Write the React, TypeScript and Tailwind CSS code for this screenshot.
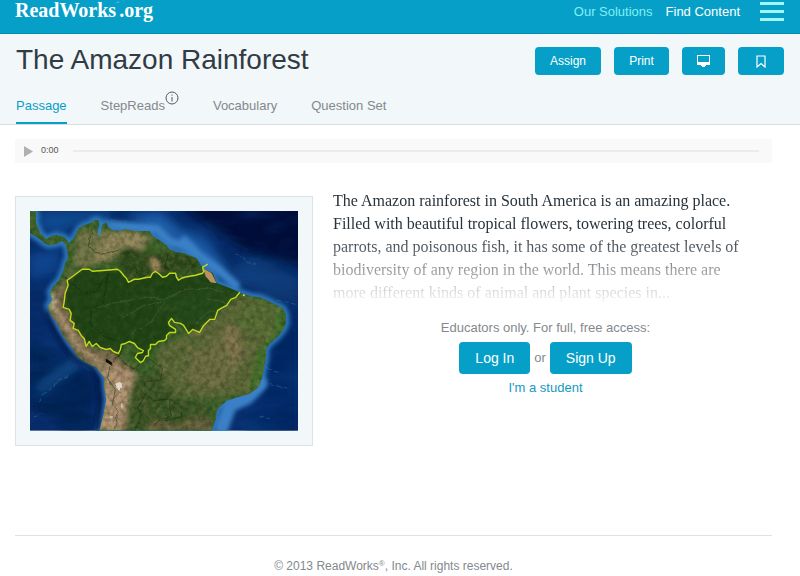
const LAND =
  'M0 0 L6 1 L6 12 L10 22 L16 28 L22 25 L26 24 L34 26 L39 32 L44 27 L46 22 L49 17 L54 14 L61 12 L64 9 L68 9 L69 14 L67 20 L71 20 L72 14 L76 11 L78 16 L82 19 L89 20 L96 18 L104 20 L112 20 L119 20 L122 25 L129 29 L136 34 L139 38 L146 41 L154 42 L166 47 L169 52 L172 57 L182 62 L184 67 L186 72 L199 77 L211 82 L220 85 L229 86 L238 90 L246 94 L252 97 L255 104 L255 112 L252 119 L246 126 L240 131 L235 137 L235 147 L233 156 L231 167 L227 176 L219 182 L208 185 L196 189 L190 194 L186 199 L185 208 L181 219 L69 219 L72 208 L74 199 L76 188 L74 176 L74 166 L66 156 L55 151 L46 144 L42 136 L37 130 L32 122 L26 110 L19 101 L18 94 L22 89 L20 81 L24 74 L29 69 L32 62 L34 57 L35 52 L38 46 L37 39 L36 34 L32 30 L26 33 L19 34 L14 32 L11 29 L5 25 L0 22 Z';

const AMAZON =
  'M177 53 L174 55 L172 56 L173 60 L172 62 L165 64 L159 65 L154 66 L151 67 L148 69 L146 66 L145 62 L139 62 L136 65 L132 66 L129 63 L125 60 L122 62 L120 66 L117 66 L108 68 L104 68 L98 71 L96 67 L94 65 L90 60 L87 58 L76 59 L62 60 L59 58 L52 58 L48 61 L44 64 L40 67 L37 69 L38 74 L35 82 L34 91 L33 96 L39 98 L41 102 L40 109 L44 112 L43 117 L48 119 L51 124 L54 127 L56 135 L59 130 L62 135 L66 132 L70 136 L76 138 L80 137 L83 140 L88 142 L90 138 L91 133 L95 132 L99 130 L104 132 L107 136 L113 139 L112 141 L107 142 L105 146 L110 151 L113 149 L115 145 L118 144 L118 139 L120 137 L120 133 L125 133 L128 130 L134 129 L136 127 L136 124 L139 121 L145 121 L145 118 L139 114 L138 111 L141 107 L144 111 L150 112 L153 114 L158 122 L162 118 L169 121 L173 114 L179 108 L184 108 L187 99 L192 96 L196 94 L200 88 L205 86 L209 81';

const tools = 'flex h-7 items-center justify-center rounded bg-[#069fc8] text-xs text-white';
const blueLink = 'flex h-8 items-center justify-center rounded bg-[#069fc8] px-4 text-sm text-white';

function AmazonMap() {
  return (
    <svg viewBox="0 0 267 219" className="block w-full" role="img" aria-label="Satellite map of the Amazon rainforest">
      <defs>
        <filter id="soft" x="-20%" y="-20%" width="140%" height="140%">
          <feGaussianBlur stdDeviation="5" />
        </filter>
        <filter id="coast" x="-20%" y="-20%" width="140%" height="140%">
          <feGaussianBlur stdDeviation="2" />
        </filter>
        <filter id="edge" x="-5%" y="-5%" width="110%" height="110%">
          <feTurbulence type="fractalNoise" baseFrequency="0.12" numOctaves="3" seed="4" />
          <feDisplacementMap in="SourceGraphic" scale="4" xChannelSelector="R" yChannelSelector="G" />
        </filter>
        <filter id="terrain" x="0" y="0" width="100%" height="100%" colorInterpolationFilters="sRGB">
          <feTurbulence type="fractalNoise" baseFrequency="0.16" numOctaves="5" seed="9" />
          <feColorMatrix values="0 0 0 0 0.62  0 0 0 0 0.56  0 0 0 0 0.36  1.8 1.2 0 0 -1.25" />
        </filter>
        <filter id="shade" x="0" y="0" width="100%" height="100%" colorInterpolationFilters="sRGB">
          <feTurbulence type="fractalNoise" baseFrequency="0.2" numOctaves="4" seed="21" />
          <feColorMatrix values="0 0 0 0 0.04  0 0 0 0 0.1  0 0 0 0 0.02  2 1 0 0 -1.2" />
        </filter>
        <filter id="waves" x="0" y="0" width="100%" height="100%" colorInterpolationFilters="sRGB">
          <feTurbulence type="fractalNoise" baseFrequency="0.02 0.05" numOctaves="5" seed="3" />
          <feColorMatrix values="0 0 0 0 0.08  0 0 0 0 0.3  0 0 0 0 0.6  2 1 0 0 -1.3" />
        </filter>
        <clipPath id="frame"><rect width="267" height="219" /></clipPath>
        <clipPath id="land"><path d={LAND} /></clipPath>
      </defs>
      <g clipPath="url(#frame)">
        <rect width="267" height="219" fill="#062a66" />
        <g filter="url(#soft)">
          <path d="M145 -10 H277 V55 L225 45 L190 25 Z" fill="#020f38" />
          <path d="M8 0 H80 V8 L50 12 L30 22 L12 18Z" fill="#0b4a8f" />
          <path d="M0 125 L45 150 L65 175 L60 219 H35 L0 195Z" fill="#042153" />
          <path d="M0 42 L30 38 L28 60 L0 68Z" fill="#08428a" />
          <path d="M95 5 L130 0 L150 18 L175 28 L195 55 L215 72 L180 60 L140 30Z" fill="#1a5ca6" />
          <path d="M190 60 L225 45 L267 68 V92 L240 88Z" fill="#0a3973" />
          <path d="M240 130 L267 105 V219 H215Z" fill="#052762" />
          <path d="M8 178 L48 150" stroke="#164f8d" strokeWidth="7" />
        </g>
        <rect width="267" height="219" filter="url(#waves)" opacity=".3" />
        <path d={LAND} fill="none" stroke="#2f78bd" strokeWidth="7" strokeLinejoin="round" filter="url(#coast)" />
        <g filter="url(#coast)" fill="none" stroke="#3a80c6" strokeLinecap="round" strokeLinejoin="round">
          <path d="M82 14 L126 18 L140 31 L155 35 L168 44 L188 59 L205 74" strokeWidth="9" />
          <path d="M154 29 L166 41" strokeWidth="8" />
          <path d="M24 104 L36 123 L46 138" strokeWidth="7" />
          <path d="M230 172 L216 186 L199 194 L191 216" strokeWidth="14" />
        </g>
        <path d="M15 99 L24 118 L35 136 L47 149 L62 157 L68 168 L70 190 L67 219" fill="none" stroke="#021742" strokeWidth="4" filter="url(#coast)" />
        <g fill="none" stroke="#3a78aa" strokeWidth="1" filter="url(#edge)" opacity=".45">
          <path d="M80 9 L94 11 L106 11 M9 190 L14 182 L28 171 L38 163 M4 204 L12 201 M204 42 L215 50 L225 52 M236 157 L249 160 M239 173 L260 177 M228 205 L239 207 M246 89 L265 93" strokeDasharray="5 2" />
        </g>

        <path d={LAND} fill="#3b6329" />
        <g clipPath="url(#land)">
          <g filter="url(#coast)">
            <path d="M49 18 L72 20 L97 20 L123 25 L113 38 L94 36 L84 49 L67 53 L50 56 L43 48Z" fill="#75784a" />
            <path d="M78 24 L105 20 L117 31 L108 41 L92 33 L78 47 L65 51 L69 38Z" fill="#958a5f" />
            <path d="M85 47 L96 35 L119 42 L145 42 L169 50 L168 61 L134 62 L118 65 L97 68Z" fill="#2d4b1c" />
            <path d="M119 48 L125 46 L130 56 L127 61 L122 57Z" fill="#ad9167" />
            <path d={AMAZON} fill="#234719" />
            <path d="M135 88 L175 77 L186 73 L207 83 L187 99 L174 115 L142 111 L126 98Z" fill="#2f5723" />
            <path d="M192 99 L210 85 L249 96 L254 112 L237 133 L231 163 L218 181 L180 187 L145 184 L127 166 L127 137 L158 122Z" fill="#5c6937" />
            <path d="M190 117 L207 115 L211 132 L222 142 L208 151 L202 169 L181 177 L154 169 L161 141 L179 136Z" fill="#6d6e43" />
            <path d="M196 113 L208 114 L209 151 L202 153 L194 132Z" fill="#817450" />
            <path d="M213 90 L246 96 L253 108 L239 128 L218 117 L203 118Z" fill="#566e34" />
            <path d="M246 96 L255 103 L253 117 L235 137 L234 160 L226 179 L219 175 L227 138 L245 119Z" fill="#43732b" />
            <path d="M104 165 L128 158 L147 187 L178 190 L181 219 H98Z" fill="#3a5728" />
            <path d="M25 78 L37 68 L34 94 L47 119 L62 138 L81 139 L106 160 L99 180 L97 219 H69 L74 167 L60 154 L45 142 L20 103Z" fill="#806d50" />
            <path d="M78 150 L105 163 L98 190 L91 219 H72 L78 185 L74 166Z" fill="#b49577" />
            <path d="M20 90 L29 104 L50 137 L69 151 L76 168 L76 188 L70 219" fill="none" stroke="#bda281" strokeWidth="4" />
            <path d="M36 70 L51 42 L59 24 M40 67 L47 48 M51 60 L63 34" fill="none" stroke="#6f784a" strokeWidth="3" />
            <path d="M20 82 L24 90 L20 97" fill="none" stroke="#d2c1a8" strokeWidth="4" />
            <path d="M120 207 L142 213 L169 205 L181 209 V219 H117Z" fill="#66613c" />
          </g>
          <rect width="267" height="219" filter="url(#terrain)" opacity=".3" />
          <rect width="267" height="219" filter="url(#shade)" opacity=".3" />
          <path d={AMAZON} fill="#1c4112" opacity=".6" />
          <path d="M172 56 L181 62 L186 72 L180 71 L175 65Z" fill="#b8935f" />
          <g fill="none" stroke="#172410" strokeWidth=".7" filter="url(#edge)" opacity=".7">
            <path d="M62 18 L58 35 L64 41 L76 43 L88 39 M36 67 L53 82 L67 80 L78 62 L73 92 L61 99 L60 113 L74 125 L85 130" />
            <path d="M99 51 L111 66 L120 61 M137 45 L134 56 L145 65 M154 44 L164 54 L154 64 M93 137 L80 155 L77 166 L85 178 L82 193 L88 199 L84 219" />
            <path d="M85 142 L103 158 L116 145 L132 157 L130 168 L116 171 L110 180 L124 189 L139 187 L140 203 L123 213 M140 186 L151 195 L151 205 L134 209 M104 219 L111 204 L107 195 L116 181" />
          </g>
          <g fill="none" stroke="#536843" strokeWidth="1" filter="url(#edge)" opacity=".5">
            <path d="M60 99 L82 92 L100 89 L116 85 L134 88 L155 78 L174 77 L192 80 M92 106 L111 96 L133 89 M101 123 L122 109 L135 90 M164 113 L180 99 L193 104" />
            <path d="M176 88 L187 88 L205 98 M145 113 L165 134 L181 133 L198 120 M144 158 L166 153 L178 171 M199 142 L216 146 L225 138" />
          </g>
          <path d="M76 148 L81 151 L81 153 L76 150Z" fill="#080c09" stroke="#080c09" />
          <g fill="#e1dbce" filter="url(#edge)">
            <path d="M85 172 L90 170 L92 175 L89 178 L86 176Z" />
            <path d="M91 191 l3 2 l-1 3 l-3 -2z M88 182 l2 0 l0 3 l-2 -1z M80 204 l3 1 l-1 3 l-3 -1z" opacity=".6" />
          </g>
        </g>
        <path d="M68 20 L71 17 L70 25 L67 24Z" fill="#3e85b5" />
        <path d={AMAZON} fill="none" stroke="#c2d91e" strokeWidth="1.4" strokeLinejoin="round" />
        <circle cx="213" cy="84" r="1" fill="#dcd67a" />
      </g>
    </svg>
  );
}

export default function App() {
  return (
    <div className="min-h-screen bg-white font-['Liberation_Sans',Arial,sans-serif] text-[#83898d]">
      <header className="flex h-[34px] items-start justify-between border-b border-[#058eb4] bg-[#069fc8] pr-4 pl-[15px]">
        <a href="#" className="flex font-['Liberation_Serif',serif] text-xl leading-5 font-bold text-white">
          ReadWorks
          <span className="pt-px text-[4px] leading-none font-normal text-[#9be4ee]">®</span>
          .org
        </a>
        <nav className="flex items-start text-[13px] leading-6">
          <a href="#" className="text-[#82eff5]">Our Solutions</a>
          <a href="#" className="ml-[13px] text-white">Find Content</a>
          <button aria-label="Menu" className="ml-5 flex flex-col gap-[5px] pt-[2px]">
            <span className="h-[3px] w-6 bg-[#a1f6f8]" />
            <span className="h-[3px] w-6 bg-[#a1f6f8]" />
            <span className="h-[3px] w-6 bg-[#a1f6f8]" />
          </button>
        </nav>
      </header>

      <section className="border-b border-[#d8dedf] bg-[#f2f7f9] px-4 pt-[10px]">
        <div className="flex items-start justify-between">
          <h1 className="text-[28px] leading-8 text-[#303b44]">The Amazon Rainforest</h1>
          <div className="flex gap-[13px] pt-[3px]">
            <button className={`${tools} w-[66px]`}>Assign</button>
            <button className={`${tools} w-[55px]`}>Print</button>
            <button aria-label="Present" className={`${tools} w-[43px]`}>
              <svg viewBox="0 0 13 12" className="h-3 w-[13px]" fill="currentColor">
                <path fillRule="evenodd" d="M0 0H13V10H9V11H8V12H5V11H4V10H0ZM1 1V7H12V1Z" />
              </svg>
            </button>
            <button aria-label="Bookmark" className={`${tools} w-[46px]`}>
              <svg viewBox="0 0 10 13" className="h-[13px] w-[10px]" fill="none" stroke="currentColor" strokeWidth="1.2">
                <path d="M1 1H9V12L5 8.5L1 12Z" />
              </svg>
            </button>
          </div>
        </div>
        <nav className="mt-[18px] flex gap-[34px] text-[13px] leading-6">
          <a href="#" className="border-b-2 border-[#069fc8] pb-1 text-[#069fc8]">Passage</a>
          <a href="#" className="flex">
            StepReads
            <svg viewBox="0 0 14 14" className="-mt-[3px] h-[14px] w-[14px]" fill="none" stroke="#53595d">
              <circle cx="7" cy="7" r="6" />
              <path d="M7 6V10.5M7 3.5V4.7" />
            </svg>
          </a>
          <a href="#">Vocabulary</a>
          <a href="#">Question Set</a>
        </nav>
      </section>

      <div className="pr-7 pl-[15px]">
        <div className="mt-[14px] flex h-6 items-center bg-[#f9f9f9] px-[9px]">
          <button aria-label="Play" className="text-[#aeb0b1]">
            <svg viewBox="0 0 9 11" className="h-[11px] w-[9px]" fill="currentColor">
              <path d="M0 0L9 5.5L0 11Z" />
            </svg>
          </button>
          <span className="ml-2 text-[9px] text-[#555]">0:00</span>
          <div className="mr-1 ml-[14px] h-[2px] flex-1 bg-[#ececec]" />
        </div>

        <main className="mt-[33px] flex gap-5">
          <figure className="w-[298px] shrink-0 self-start border border-[#dce3e5] bg-[#f2f7f9] px-[14px] pt-[14px] pb-[14px]">
            <AmazonMap />
          </figure>
          <div className="min-w-0 flex-1">
            <p className="-mt-[7px] max-w-[422px] pb-2 font-['Liberation_Serif',serif] text-base leading-[23px] text-[#29333b] [mask-image:linear-gradient(#000_36%,transparent_94%)]">
              The Amazon rainforest in South America is an amazing place. Filled with beautiful tropical flowers, towering trees, colorful parrots, and poisonous fish, it has some of the greatest levels of biodiversity of any region in the world. This means there are more different kinds of animal and plant species in...
            </p>
            <div className="flex max-w-[425px] flex-col items-center pt-[6px] text-[13px]">
              <p className="leading-5">Educators only. For full, free access:</p>
              <div className="mt-1 flex items-center gap-1">
                <button className={blueLink}>Log In</button>
                or
                <button className={blueLink}>Sign Up</button>
              </div>
              <a href="#" className="mt-1 leading-5 text-[#1599bf]">I'm a student</a>
            </div>
          </div>
        </main>

        <footer className="mt-[89px] border-t border-[#dfe2e3] pt-5 text-center text-xs leading-5">
          © 2013 ReadWorks<sup className="text-[8px]">®</sup>, Inc. All rights reserved.
        </footer>
      </div>
    </div>
  );
}
